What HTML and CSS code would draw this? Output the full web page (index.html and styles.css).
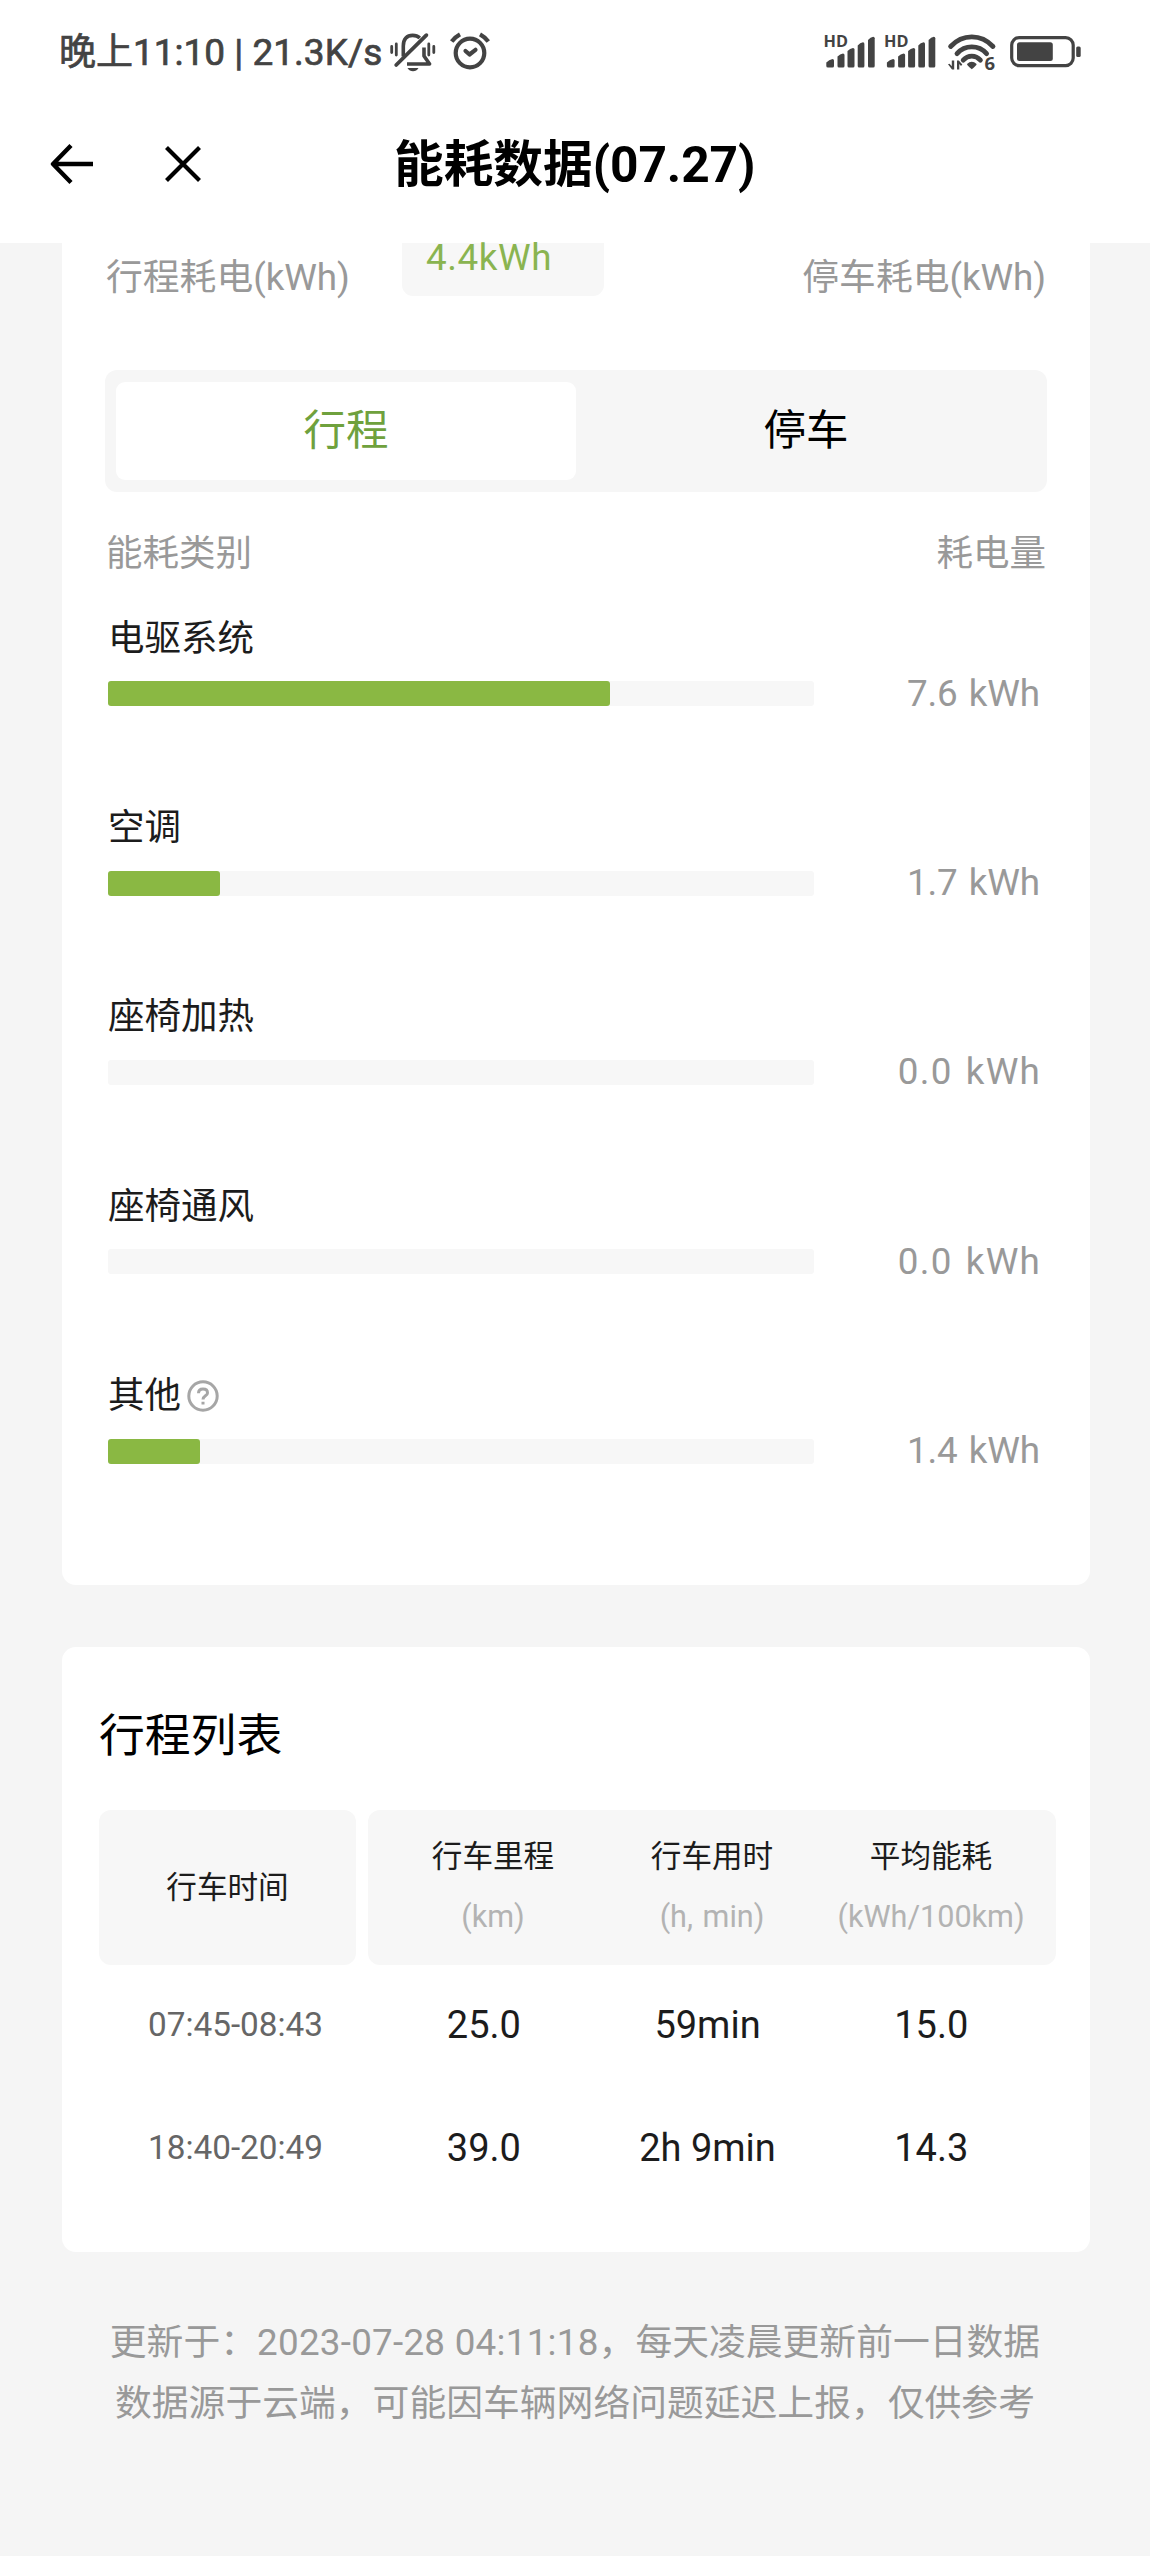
FILE: index.html
```html
<!DOCTYPE html>
<html lang="zh-CN">
<head>
<meta charset="utf-8">
<title>能耗数据(07.27)</title>
<link rel="stylesheet" href="styles.css">
</head>
<body>
<header class="header">
  <div class="status">
    <span class="status-text">晚上11:10 | 21.3K/s</span>
    <svg class="icon-bell" width="46" height="40" viewBox="0 0 46 40" fill="none" stroke="currentColor">
      <path d="M13.3 24.5V14C13.3 7 17 3.4 22.6 3.4C25.6 3.4 28 4.3 29.8 6" stroke-width="3.6"/>
      <path d="M6.2 33L36.4 3.2" stroke-width="3.8" stroke-linecap="round"/>
      <path d="M17 32H39.6L34 24V15.500" stroke-width="3.6" stroke-linejoin="round"/>
      <path d="M1.700 14.500V20.500M6.300 12V23M38.800 12V23M43.800 14.500V20.500" stroke-width="2.800" stroke-linecap="round"/>
      <path d="M17.500 36H28.500Q26.500 39.300 23 39.300T17.500 36Z" fill="currentColor" stroke="none"/>
    </svg>
    <svg class="icon-alarm" width="42" height="40" viewBox="0 0 42 40" fill="none" stroke="currentColor" stroke-width="4.200">
      <circle cx="21" cy="21" r="14.300"/>
      <path d="M16.500 19L20.500 22.500L26.500 17.800" stroke-linecap="round" stroke-linejoin="round"/>
      <path d="M2.700 9.500Q6 5 11 2.300M31 2.300Q36 5 39.300 9.500"/>
    </svg>
    <div class="status-right">
      <svg width="260" height="44" viewBox="822 30 260 44" fill="currentColor">
        <g id="signal">
          <text class="hd" x="823.500" y="47" textLength="24.500" lengthAdjust="spacingAndGlyphs">HD</text>
          <path d="M826.300 66V62.500Q829 59.500 832.500 59Q834 59 834 60.500V66Q834 67.500 832.500 67.500H828Q826.300 67.500 826.300 66Z"/>
          <path d="M837.500 66V56.500Q840 53.800 843 53.500Q844.500 53.500 844.500 55V66Q844.500 67.500 843 67.500H839Q837.500 67.500 837.500 66Z"/>
          <path d="M847.500 66V51Q850 48.300 853 48Q854.500 48 854.500 49.500V66Q854.500 67.500 853 67.500H849Q847.500 67.500 847.500 66Z"/>
          <path d="M857.700 66V45.500Q860 42.800 863 42.300Q864.400 42.300 864.400 44V66Q864.400 67.500 863 67.500H859.200Q857.700 67.500 857.700 66Z"/>
          <path d="M868 66V40Q870.500 37.200 873.200 36.700Q874.700 36.700 874.700 38.300V66Q874.700 67.500 873.200 67.500H869.500Q868 67.500 868 66Z"/>
        </g>
        <use href="#signal" x="60.600"/>
        <g fill="none" stroke="currentColor" stroke-width="4.800" stroke-linecap="round">
          <path d="M950.600 46.500Q959.500 36.900 971.800 36.900T993 46.500"/>
          <path d="M957 53.600Q963 46.900 971.800 46.900T986.600 53.600"/>
          <path d="M963.200 60.200Q966.800 56.200 971.800 56.200T980.400 60.200"/>
        </g>
        <path d="M967 64Q971.800 59.500 976.600 64Q976.600 65.500 971.800 69.200Q967 65.500 967 64Z"/>
        <path d="M948 64.300L952 69.500H954.200V60.500H951.800V66.200L949.500 63.800ZM957 69.500H959.300V64L961 66L962.300 64.600L958.800 60.500H957Z"/>
        <text class="six" x="984.500" y="70.300">6</text>
        <rect x="1011.700" y="37.600" width="61.500" height="28" rx="7.500" fill="none" stroke="currentColor" stroke-width="3.200"/>
        <rect x="1017" y="42.300" width="35.800" height="18.700" rx="2.500"/>
        <rect x="1076.200" y="46.500" width="4.500" height="10.500" rx="1.500"/>
      </svg>
    </div>
  </div>
  <nav class="nav">
    <svg class="icon-back" width="44" height="42" viewBox="0 0 44 42" fill="none" stroke="currentColor" stroke-width="4.400" stroke-linejoin="round"><path d="M21 2.500L3 21L21 39.500M3 21H43"/></svg>
    <svg class="icon-close" width="36" height="36" viewBox="0 0 36 36" fill="none" stroke="currentColor" stroke-width="4.200"><path d="M1.500 1.500L34.500 34.500M34.500 1.500L1.500 34.500"/></svg>
    <h1 class="nav-title">能耗数据<span class="nav-date">(07.27)</span></h1>
  </nav>
</header>
<main>
  <section class="card usage">
    <div class="summary">
      <span class="summary-label">行程耗电<span class="unit">(kWh)</span></span>
      <span class="chip">4.4kWh</span>
      <span class="summary-label summary-right">停车耗电<span class="unit">(kWh)</span></span>
    </div>
    <div class="tabs"><div class="tab tab-active">行程</div><div class="tab">停车</div></div>
    <div class="columns"><span>能耗类别</span><span>耗电量</span></div>
    <div class="item"><div class="name">电驱系统</div><div class="bar"><div class="track"><div class="fill" style="width:71.1%"></div></div><span class="value">7.6 kWh</span></div></div>
    <div class="item"><div class="name">空调</div><div class="bar"><div class="track"><div class="fill" style="width:15.9%"></div></div><span class="value">1.7 kWh</span></div></div>
    <div class="item"><div class="name">座椅加热</div><div class="bar"><div class="track"></div><span class="value value-zero">0.0 kWh</span></div></div>
    <div class="item"><div class="name">座椅通风</div><div class="bar"><div class="track"></div><span class="value value-zero">0.0 kWh</span></div></div>
    <div class="item"><div class="name">其他<svg class="icon-help" width="32" height="32" viewBox="0 0 32 32" fill="none" stroke="currentColor" stroke-width="3"><circle cx="16" cy="16" r="14.200"/><path d="M11.500 13.200C11.500 10.400 13.300 9 16 9S20.500 10.500 20.500 12.900C20.500 16 16 15.700 16 19.500M16 21.800V24.600"/></svg></div><div class="bar"><div class="track"><div class="fill" style="width:13%"></div></div><span class="value">1.4 kWh</span></div></div>
  </section>
  <section class="card trips">
    <h2 class="trips-title">行程列表</h2>
    <div class="thead">
      <div class="th-time">行车时间</div>
      <div class="th-group">
        <div class="th">行车里程<span class="th-unit">(km)</span></div>
        <div class="th">行车用时<span class="th-unit">(h, min)</span></div>
        <div class="th">平均能耗<span class="th-unit">(kWh/100km)</span></div>
      </div>
    </div>
    <div class="row"><span class="time">07:45-08:43</span><span>25.0</span><span>59min</span><span>15.0</span></div>
    <div class="row"><span class="time">18:40-20:49</span><span>39.0</span><span>2h 9min</span><span>14.3</span></div>
  </section>
</main>
<footer class="note">
  <p>更新于：<span class="stamp">2023-07-28 04:11:18</span>，每天凌晨更新前一日数据</p>
  <p>数据源于云端，可能因车辆网络问题延迟上报，仅供参考</p>
</footer>
</body>
</html>
```

FILE: styles.css
```css
* { box-sizing: border-box; }
body {
  margin: 0;
  min-height: 2556px;
  background: #f5f5f5;
  color: #1c1c1c;
  font-family: Roboto, "Noto Sans CJK SC", sans-serif;
  font-size: 36.8px;
  line-height: 50px;
}
h1, h2, p { margin: 0; font-weight: 400; }
svg { display: block; flex: none; }

.header { height: 243px; background: #fff; }
.status {
  display: flex;
  align-items: center;
  height: 104px;
  padding: 0 68px 0 59px;
  color: #434343;
}
.status-text { width: 331px; padding-top: 2px; font-size: 37px; -webkit-text-stroke: 0.7px currentColor; white-space: nowrap; }
.icon-alarm { margin-left: 13px; }
.status-right { margin-left: auto; }
.hd { font: 700 15.5px "Open Sans", sans-serif; }
.six { font: 700 18.5px "Open Sans", sans-serif; }
.nav { display: flex; align-items: center; height: 120px; padding-left: 50px; color: #000; }
.icon-close { margin-left: 71px; }
.nav-title { margin-left: 193px; padding-top: 2px; font-size: 49.7px; font-weight: 700; line-height: 70px; white-space: nowrap; }
.nav-date { letter-spacing: -0.1px; }

.card { width: 1028px; margin: 0 auto 0 62px; background: #fff; }
.usage { padding: 0 43px 24.7px; border-radius: 0 0 14px 14px; }
.summary { display: grid; grid-template-columns: 297px 202px 1fr; height: 127px; color: #999; white-space: nowrap; }
.summary-label { padding: 10px 1px 0 1px; }
.summary-right { text-align: right; }
.unit { letter-spacing: -0.1px; }
.chip { height: 53px; padding-left: 24px; border-radius: 0 0 11px 11px; background: #f7f7f7; color: #8ab450; line-height: 29px; letter-spacing: 0.6px; }
.tabs { display: flex; height: 122px; padding: 12px 11px; border-radius: 12px; background: #f6f6f6; }
.tab { flex: 1; color: #000; font-size: 42.5px; line-height: 98px; text-align: center; }
.tab-active { border-radius: 9px; background: #fff; color: #6fa13d; }
.columns { display: flex; justify-content: space-between; margin: 37px 1px 34.5px 1px; color: #999; font-size: 36.5px; }
.item { height: 189.35px; padding: 0 7px 0 3px; }
.name { display: flex; align-items: center; margin-bottom: 17.8px; font-size: 36.5px; }
.icon-help { margin-left: 6px; color: #a6a6a6; }
.bar { display: flex; justify-content: space-between; align-items: center; height: 25px; }
.track { width: 706px; height: 25px; border-radius: 3px; background: #f7f7f7; }
.fill { height: 25px; border-radius: 3px; background: #8ab843; }
.value { color: #999; letter-spacing: -0.1px; word-spacing: 2px; }
.value-zero { letter-spacing: 1.2px; margin-right: -1px; word-spacing: 3px; }

.trips { margin-top: 62px; padding: 58px 34px 43.6px 37px; border-radius: 14px; }
.trips-title { height: 105px; color: #000; font-size: 45.8px; line-height: 63px; }
.thead { display: grid; grid-template-columns: 257px 688px; gap: 12px; height: 153px; font-size: 30.6px; text-align: center; }
.th-time, .th-group { border-radius: 12px; background: #f7f7f7; }
.th-time { line-height: 155px; }
.th-group { display: grid; grid-template-columns: repeat(3, 219px); justify-content: center; padding-top: 17px; }
.th { line-height: 60px; }
.th-unit { display: block; color: #b3b3b3; word-spacing: 2px; }
.row { display: grid; grid-template-columns: 273px repeat(3, 223.7px); height: 122.7px; font-size: 38px; line-height: 124px; text-align: center; }
.time { color: #666; font-size: 33.3px; }

.note { padding-top: 60.5px; color: #999; line-height: 61px; text-align: center; white-space: nowrap; }
.stamp { letter-spacing: 0.25px; }
```
